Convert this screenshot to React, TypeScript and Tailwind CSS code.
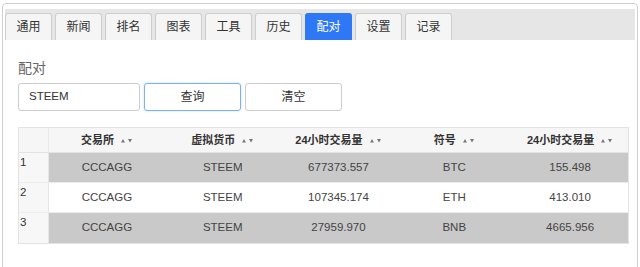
import React from "react";

const tabs = ["通用", "新闻", "排名", "图表", "工具", "历史", "配对", "设置", "记录"];

const headers = ["交易所", "虚拟货币", "24小时交易量", "符号", "24小时交易量"];

const rows = [
  { exchange: "CCCAGG", coin: "STEEM", volume: "677373.557", symbol: "BTC", volume2: "155.498" },
  { exchange: "CCCAGG", coin: "STEEM", volume: "107345.174", symbol: "ETH", volume2: "413.010" },
  { exchange: "CCCAGG", coin: "STEEM", volume: "27959.970", symbol: "BNB", volume2: "4665.956" },
];

const font = { fontFamily: '"Liberation Sans", Arial, "Noto Sans CJK SC", sans-serif' };

const SortArrows: React.FC = () => (
  <svg width="12" height="5" viewBox="0 0 12 5" className="ml-[7px] inline-block">
    <path d="M0 4.5 L2 1 L4 4.5 Z" fill="#777" />
    <path d="M7 1 L11 1 L9 4.5 Z" fill="#777" />
  </svg>
);

const App: React.FC = () => {
  return (
    <div className="w-[640px] h-[267px] overflow-hidden bg-white" style={font}>
      <div className="ml-[2px] mt-[3px] w-[636px] h-[280px] border border-[#cfcfcf] rounded-[4px] bg-white">
        {/* tab bar */}
        <div className="mx-[2px] mt-[5px] h-[31px] bg-[#e6e6e6] flex items-end gap-[3px]">
          {tabs.map((t) => (
            <div
              key={t}
              className={`w-[47px] h-[27px] flex items-center justify-center rounded-t-[3px] border border-b-0 text-[12px] ${
                t === "配对"
                  ? "bg-[#2f78f5] border-[#2f78f5] text-white"
                  : "bg-[#f5f5f5] border-[#cdcdcd] text-[#333]"
              }`}
            >
              {t}
            </div>
          ))}
        </div>

        {/* content */}
        <div className="pl-[15px] pt-[18px]">
          <div className="text-[14px] leading-[20px] text-[#666]">配对</div>
          <div className="mt-[5px] flex gap-[4px]">
            <div className="w-[122px] h-[28px] border border-[#ccc] rounded-[3px] flex items-center pl-[10px] text-[11.5px] text-[#333]">
              STEEM
            </div>
            <div className="w-[97px] h-[28px] border border-[#7fb0ea] rounded-[3px] flex items-center justify-center text-[12px] text-[#333] shadow-[0_0_2px_rgba(102,175,233,0.5)]">
              查询
            </div>
            <div className="w-[97px] h-[28px] border border-[#ccc] rounded-[3px] flex items-center justify-center text-[12px] text-[#333]">
              清空
            </div>
          </div>

          {/* table */}
          <div className="mt-[16px] w-[611px] border border-[#e3e3e3]">
            <div className="grid grid-cols-[30px_repeat(5,1fr)] h-[25px] bg-[#f6f6f6] border-b border-[#e3e3e3]">
              <div className="border-r border-[#eaeaea]" />
              {headers.map((h, i) => (
                <div key={i} className="flex items-center justify-center text-[11px] font-bold text-[#333]">
                  {h}
                  <SortArrows />
                </div>
              ))}
            </div>
            {rows.map((r, i) => {
              const cells = [r.exchange, r.coin, r.volume, r.symbol, r.volume2];
              const shaded = i % 2 === 0;
              return (
                <div
                  key={i}
                  className={`grid grid-cols-[30px_repeat(5,1fr)] h-[30px] ${i < rows.length - 1 ? "border-b border-[#ececec]" : ""}`}
                >
                  <div className="bg-[#f7f7f7] border-r border-[#e6e6e6] pl-[1px] pt-[2px] text-[11.5px] leading-[14px] text-[#333]">
                    {i + 1}
                  </div>
                  {cells.map((c, j) => (
                    <div
                      key={j}
                      className={`flex items-center justify-center text-[11.5px] text-[#444] ${
                        shaded ? "bg-[#c9c9c9]" : "bg-white"
                      }`}
                    >
                      {c}
                    </div>
                  ))}
                </div>
              );
            })}
          </div>
        </div>
      </div>
    </div>
  );
};

export default App;
